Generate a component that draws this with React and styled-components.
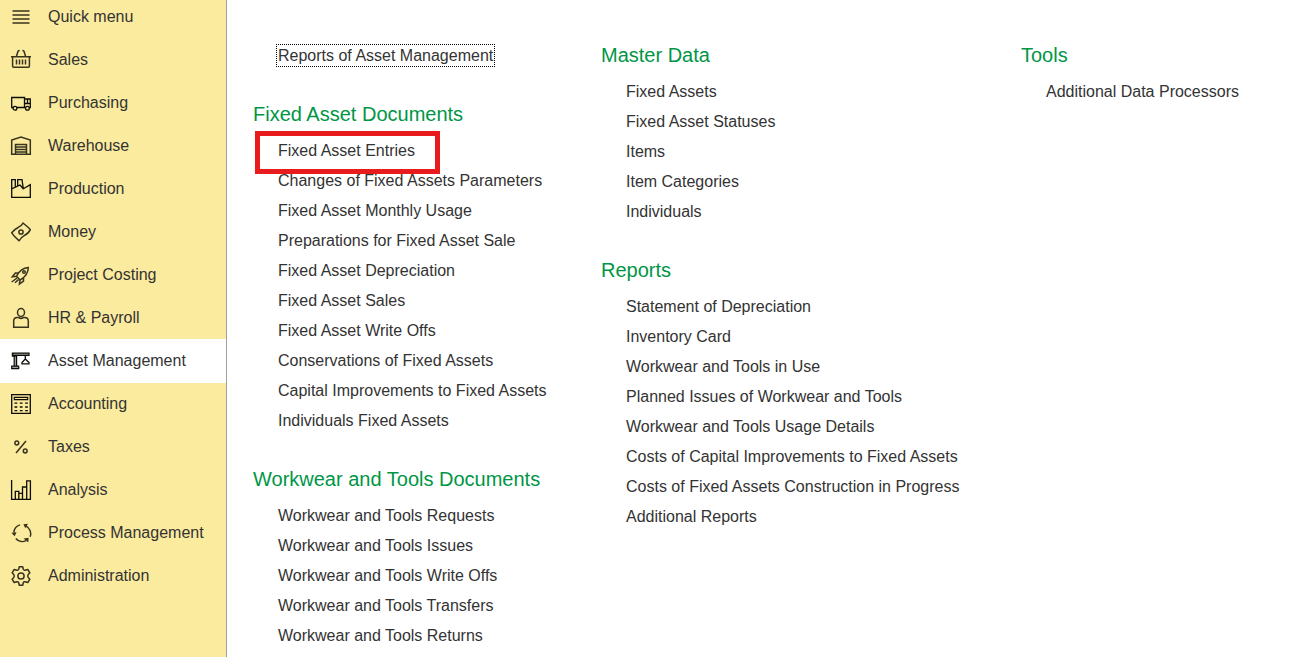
import React, { useState } from "react";
import styled, { createGlobalStyle } from "styled-components";

const GlobalStyle = createGlobalStyle`
	* {
		box-sizing: border-box;
	}

	body {
		margin: 0;
		background: #fff;
		color: #333;
		font-family: "Liberation Sans", Arial, sans-serif;
		font-size: 16px;
	}
`;

const Page = styled.div`
	display: flex;
	min-height: 100vh;
`;

const Sidebar = styled.nav`
	flex: none;
	width: 227px;
	overflow: hidden;
	background: #fbeb9e;
	border-right: 1px solid #a0a0a0;
`;

const SidebarList = styled.ul`
	list-style: none;
	margin: -5px 0 0; /* the list is scrolled a little under the top edge */
	padding: 0;
`;

const SidebarButton = styled.button`
	display: flex;
	gap: 17px;
	width: 100%;
	height: 43px;
	padding: 12px 0 0 11px;
	border: none;
	background: ${({ $active }) => ($active ? "#fff" : "transparent")};
	box-shadow: ${({ $active }) => ($active ? "0 1px 0 #fff" : "none")};
	color: inherit;
	font: inherit;
	line-height: 20px;
	text-align: left;
	white-space: nowrap;
	cursor: pointer;
`;

const Icon = styled.svg`
	flex: none;
	width: 20px;
	height: 20px;
	overflow: visible;
	fill: none;
	stroke: ${({ $bold }) => ($bold ? "#0d0c06" : "#38341f")};
	stroke-width: 1.5;
`;

const Content = styled.main`
	display: grid;
	flex: 1;
	grid-template-columns: 87fr 105fr 68fr;
	align-items: start;
	padding: 40px 0 0 26px;
`;

const Column = styled.div`
	display: flex;
	flex-direction: column;
	gap: 29px;
`;

const Heading = styled.h2`
	margin: 0 0 6px;
	color: #009646;
	font-size: 20px;
	font-weight: normal;
	line-height: 30px;
	white-space: nowrap;
`;

const LinkList = styled.ul`
	list-style: none;
	margin: 0;
	padding: 0 0 0 25px;
`;

const LinkItem = styled.li`
	display: flex;
	align-items: center;
	height: 30px;
`;

const MenuLink = styled.a`
	position: relative;
	color: inherit;
	line-height: 19px;
	text-decoration: none;
	white-space: nowrap;
	outline: ${({ $focused }) => ($focused ? "1px dotted #000" : "none")};
	outline-offset: 1px;

	&:hover {
		text-decoration: underline;
	}
`;

const Marker = styled.span`
	position: absolute;
	inset: -10px -25px -14px -23px;
	border: 5px solid #e81c1c;
	pointer-events: none;
`;

const sections = [
	{
		name: "Quick menu",
		icon: <path d="M1.5 4h17M1.5 8h17M1.5 12h17M1.5 16h17" />,
	},
	{
		name: "Sales",
		icon: (
			<path d="M0 6.8h20M1.6 7v9.3q0 1 1 1h14.8q1 0 1-1V7M5.4 6.5L7 1.2Q7.2 0.5 8.6 0.5M14.6 6.5L13 1.2Q12.8 0.5 11.4 0.5M5.5 9.5v5M8.5 9.5v5M11.5 9.5v5M14.5 9.5v5" />
		),
	},
	{
		name: "Purchasing",
		bold: true,
		icon: (
			<>
				<path
					d="M2 14.5H0.7V4.5H13.5V14.5H6M13.5 6H19.3V14.5H18.3M14.5 14.5H13.5M14 10.5h5M16.5 6.5V10.5"
					strokeWidth="1.3"
				/>
				<circle cx="4" cy="15.2" r="1.9" strokeWidth="1.3" />
				<circle cx="16.4" cy="15.2" r="1.9" strokeWidth="1.3" />
			</>
		),
	},
	{
		name: "Warehouse",
		icon: (
			<path d="M0.7 18.3V4L10 1L19.3 4V18.3ZM4.5 18V8.5H15.5V18M4.5 11h11M4.5 13.5h11M4.5 16h11" />
		),
	},
	{
		name: "Production",
		bold: true,
		icon: (
			<path
				d="M0.7 0.7H4.3V8M0.7 0V18.3H19.3V5.7L12.3 9.8L11 0.7H6.7V7.2M0.7 9.8L9 6L12.3 9.8"
				strokeWidth="1.3"
			/>
		),
	},
	{
		name: "Money",
		icon: (
			<>
				<path
					strokeLinejoin="round"
					d="M0.7 10.8C3 8 4.5 6.6 7.5 5.2C9.5 4.2 11 3.2 12 1C14 2.8 17 4.8 19.3 7.6C18 10.6 16 12.2 12.8 13.8C10.5 15 9.2 16.6 8.2 18.8C6 17 3 14.4 0.7 10.8Z"
				/>
				<circle cx="10" cy="10" r="2.1" />
			</>
		),
	},
	{
		name: "Project Costing",
		icon: (
			<>
				<path d="M5.5 11.2C8 6.5 11.5 3 17.3 2.6C17.2 8 14 12.3 9.2 15ZM7.5 8H4.4L1.3 11.8L5.5 11.2M12.5 12.8V16L8.4 19L9 15M6 13L0.7 17M7.5 14.6L4 17.8" />
				<circle cx="13" cy="7" r="1.3" />
			</>
		),
	},
	{
		name: "HR & Payroll",
		icon: (
			<>
				<ellipse cx="10" cy="4.5" rx="3.5" ry="3.9" />
				<path d="M2.7 19.2V13Q2.7 9.4 6.3 9.4H7.5Q10 11.4 12.5 9.4H13.7Q17.3 9.4 17.3 13V19.2Z" />
			</>
		),
	},
	{
		name: "Asset Management",
		bold: true,
		icon: (
			<>
				<path
					d="M1.5 2.2H18V4.3H1.5ZM3.2 4.5H5.6V15H3.2ZM0.7 15.2H7.7V17.7H0.7Z"
					fill="#9a9a9a"
					strokeWidth="1.2"
				/>
				<path
					d="M14.3 4.5V8.3M14.3 8L11 11.5V12.8H18V11.5ZM1.5 2V5.2H4.8"
					strokeWidth="1.3"
				/>
			</>
		),
	},
	{
		name: "Accounting",
		bold: true,
		icon: (
			<>
				<path d="M0.7 0.7H19.3V19.3H0.7Z" strokeWidth="1.3" />
				<path d="M3.3 3.3H16.7V5.7H3.3Z" strokeWidth="1.2" />
				<path
					d="M3.5 9.2H17M3.5 13H17M3.5 16.7H17"
					strokeDasharray="2.8 2.5"
					strokeWidth="1.3"
				/>
			</>
		),
	},
	{
		name: "Taxes",
		icon: (
			<>
				<path d="M15 4L5 16" />
				<circle cx="5.8" cy="6" r="1.9" />
				<circle cx="14.2" cy="14" r="1.9" />
			</>
		),
	},
	{
		name: "Analysis",
		bold: true,
		icon: (
			<path
				d="M0.6 0V19.3H19.4V0.8H15.7V19M4.3 19V11.3H7.8V19M7.8 13.3H11.5M11.5 19V7H15.3"
				strokeWidth="1.3"
			/>
		),
	},
	{
		name: "Process Management",
		icon: (
			<>
				<path d="M9 1.9A8.5 8.5 0 0 0 2.9 9.5M4.8 15.5A8.5 8.5 0 0 0 15 17.6M19.2 13.8A9 9 0 0 0 14.8 2.8" />
				<path
					d="M0.4 9.8L5.6 9.3L3.6 13.3ZM12.6 15.6L17.6 14.8L17.3 19.6ZM14.2 5.2L12.4 1.2L17 0.8Z"
					fill="#38341f"
					stroke="none"
				/>
			</>
		),
	},
	{
		name: "Administration",
		icon: (
			<>
				<path
					strokeLinejoin="round"
					d="M8.3 0.8H11.7L12.3 3.3Q12.8 4.6 14.2 4.2L16.8 3.5L18.9 6.8L17.2 8.6Q16.3 10 17.2 11.4L18.9 13.2L16.8 16.5L14.2 15.8Q12.8 15.4 12.3 16.7L11.7 19.2H8.3L7.7 16.7Q7.2 15.4 5.8 15.8L3.2 16.5L1.1 13.2L2.8 11.4Q3.7 10 2.8 8.6L1.1 6.8L3.2 3.5L5.8 4.2Q7.2 4.6 7.7 3.3Z"
				/>
				<circle cx="10" cy="10" r="3.1" />
			</>
		),
	},
];

const columns = [
	[
		{ links: ["Reports of Asset Management"] },
		{
			title: "Fixed Asset Documents",
			links: [
				"Fixed Asset Entries",
				"Changes of Fixed Assets Parameters",
				"Fixed Asset Monthly Usage",
				"Preparations for Fixed Asset Sale",
				"Fixed Asset Depreciation",
				"Fixed Asset Sales",
				"Fixed Asset Write Offs",
				"Conservations of Fixed Assets",
				"Capital Improvements to Fixed Assets",
				"Individuals Fixed Assets",
			],
		},
		{
			title: "Workwear and Tools Documents",
			links: [
				"Workwear and Tools Requests",
				"Workwear and Tools Issues",
				"Workwear and Tools Write Offs",
				"Workwear and Tools Transfers",
				"Workwear and Tools Returns",
			],
		},
	],
	[
		{
			title: "Master Data",
			links: [
				"Fixed Assets",
				"Fixed Asset Statuses",
				"Items",
				"Item Categories",
				"Individuals",
			],
		},
		{
			title: "Reports",
			links: [
				"Statement of Depreciation",
				"Inventory Card",
				"Workwear and Tools in Use",
				"Planned Issues of Workwear and Tools",
				"Workwear and Tools Usage Details",
				"Costs of Capital Improvements to Fixed Assets",
				"Costs of Fixed Assets Construction in Progress",
				"Additional Reports",
			],
		},
	],
	[{ title: "Tools", links: ["Additional Data Processors"] }],
];

const focusedLink = "Reports of Asset Management";
const markedLink = "Fixed Asset Entries";

const LinkGroup = ({ title, links }) => (
	<section>
		{title && <Heading>{title}</Heading>}
		<LinkList>
			{links.map((link) => (
				<LinkItem key={link}>
					<MenuLink href="#" $focused={link === focusedLink}>
						{link}
						{link === markedLink && <Marker />}
					</MenuLink>
				</LinkItem>
			))}
		</LinkList>
	</section>
);

const App = () => {
	const [active, setActive] = useState("Asset Management");

	return (
		<>
			<GlobalStyle />
			<Page>
				<Sidebar>
					<SidebarList>
						{sections.map(({ name, icon, bold }) => (
							<li key={name}>
								<SidebarButton
									type="button"
									$active={name === active}
									onClick={() => setActive(name)}
								>
									<Icon viewBox="0 0 20 20" $bold={bold} aria-hidden="true">
										{icon}
									</Icon>
									{name}
								</SidebarButton>
							</li>
						))}
					</SidebarList>
				</Sidebar>
				<Content>
					{columns.map((groups, index) => (
						<Column key={index}>
							{groups.map((group) => (
								<LinkGroup key={group.links[0]} {...group} />
							))}
						</Column>
					))}
				</Content>
			</Page>
		</>
	);
};

export default App;
